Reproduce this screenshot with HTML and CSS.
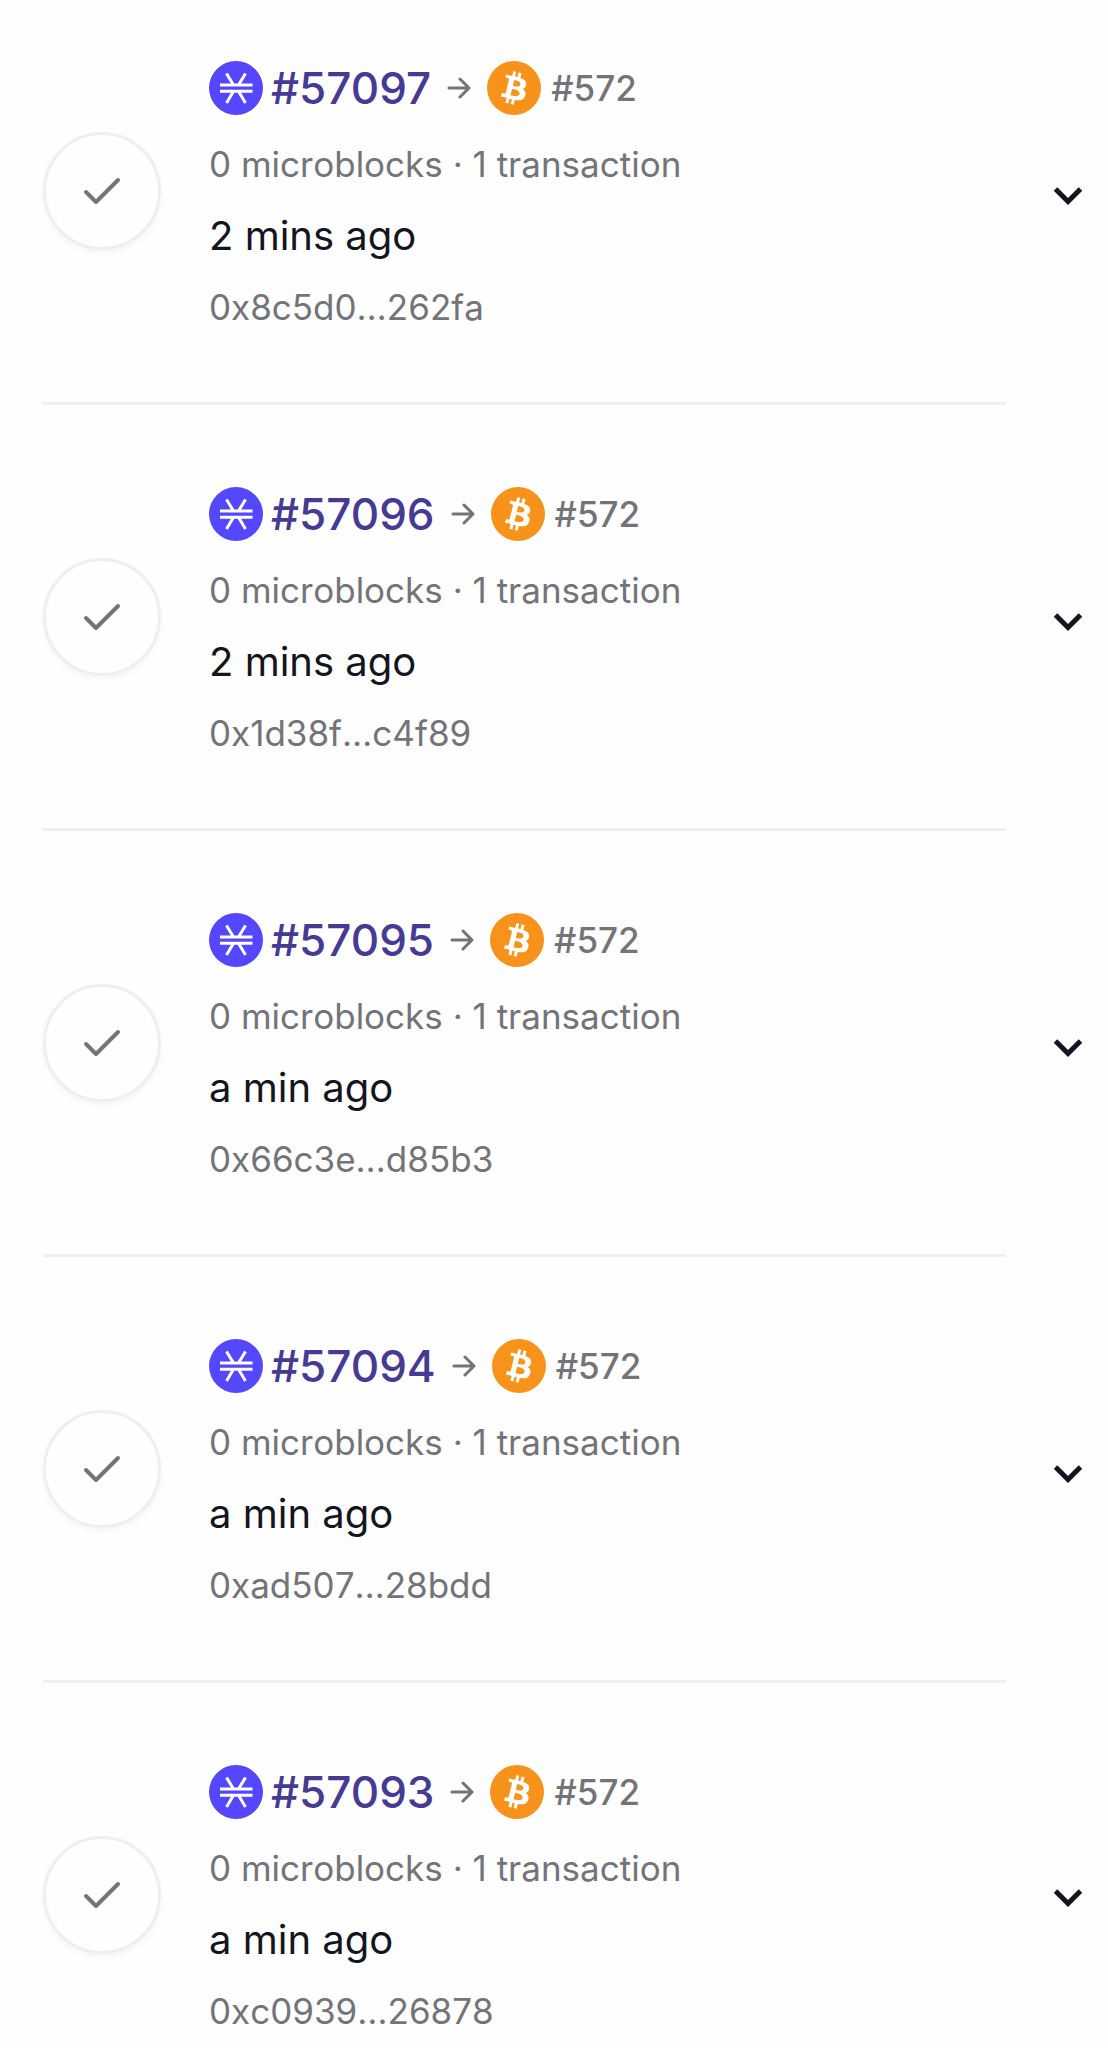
FILE: index.html
```html
<!DOCTYPE html>
<html lang="en">
<head>
    <meta charset="UTF-8">
    <meta name="viewport" content="width=device-width, initial-scale=1.0">
    <title>Recent blocks</title>
    <link rel="stylesheet" href="styles.css">
</head>
<body>
    <!-- Shared icons -->
    <svg class="sprite" aria-hidden="true">
        <symbol id="icon-check" viewBox="0 0 40 40">
            <path d="M4 21 L14 31 L36 9" fill="none" stroke="currentColor" stroke-width="4" stroke-linecap="round" stroke-linejoin="round"/>
        </symbol>
        <symbol id="icon-stx" viewBox="0 0 54 54">
            <circle cx="27" cy="27" r="27" fill="#5546ff"/>
            <path d="M11 24h32.500M11 30.300h32.500M17.500 12.500l7 11.500M36.500 12.500l-7 11.500M17.500 42l7-11.700M36.500 42l-7-11.700" fill="none" stroke="#fff" stroke-width="3"/>
        </symbol>
        <symbol id="icon-arrow" viewBox="0 0 24 22">
            <path d="M2 11h20M13 2l9 9-9 9" fill="none" stroke="currentColor" stroke-width="3" stroke-linecap="round" stroke-linejoin="round"/>
        </symbol>
        <symbol id="icon-btc" viewBox="0 0 32 32">
            <circle cx="16" cy="16" r="16" fill="#f7931a"/>
            <path fill="#fff" d="M23.189 14.02c.314-2.096-1.283-3.223-3.465-3.975l.708-2.84-1.728-.43-.69 2.765c-.454-.114-.92-.22-1.385-.326l.695-2.783L15.596 6l-.708 2.839c-.376-.086-.746-.17-1.104-.26l.002-.009-2.384-.595-.46 1.846s1.283.294 1.256.312c.7.175.826.638.805 1.006l-.806 3.235c.048.012.11.03.18.057l-.183-.045-1.13 4.532c-.086.212-.303.531-.793.41.018.025-1.256-.313-1.256-.313l-.858 1.978 2.25.561c.418.105.828.215 1.231.318l-.715 2.872 1.727.43.708-2.84c.472.127.93.245 1.378.357l-.706 2.828 1.728.43.715-2.866c2.948.558 5.164.333 6.097-2.333.752-2.146-.037-3.385-1.588-4.192 1.13-.26 1.98-1.003 2.207-2.538zm-3.95 5.538c-.533 2.147-4.148.986-5.32.695l.95-3.805c1.172.293 4.929.872 4.37 3.11zm.535-5.569c-.487 1.953-3.495.96-4.47.717l.86-3.45c.975.243 4.118.696 3.61 2.733z"/>
        </symbol>
        <symbol id="icon-chevron" viewBox="0 0 30 20">
            <path d="M2.500 3l12.500 12.500L27.500 3" fill="none" stroke="currentColor" stroke-width="5"/>
        </symbol>
    </svg>

    <ul class="block-list">
        <li class="block-item">
            <div class="block-main">
                <div class="status"><svg class="check"><use href="#icon-check"/></svg></div>
                <div class="details">
                    <div class="title">
                        <svg class="coin"><use href="#icon-stx"/></svg>
                        <a class="height" href="#57097">#57097</a>
                        <svg class="arrow"><use href="#icon-arrow"/></svg>
                        <svg class="coin"><use href="#icon-btc"/></svg>
                        <span class="anchor">#572</span>
                    </div>
                    <p class="meta">0 microblocks · 1 transaction</p>
                    <p class="time">2 mins ago</p>
                    <p class="meta">0x8c5d0…262fa</p>
                </div>
            </div>
            <button class="toggle" type="button" aria-label="Show block 57097"><svg class="chevron"><use href="#icon-chevron"/></svg></button>
        </li>

        <li class="block-item">
            <div class="block-main">
                <div class="status"><svg class="check"><use href="#icon-check"/></svg></div>
                <div class="details">
                    <div class="title">
                        <svg class="coin"><use href="#icon-stx"/></svg>
                        <a class="height" href="#57096">#57096</a>
                        <svg class="arrow"><use href="#icon-arrow"/></svg>
                        <svg class="coin"><use href="#icon-btc"/></svg>
                        <span class="anchor">#572</span>
                    </div>
                    <p class="meta">0 microblocks · 1 transaction</p>
                    <p class="time">2 mins ago</p>
                    <p class="meta">0x1d38f…c4f89</p>
                </div>
            </div>
            <button class="toggle" type="button" aria-label="Show block 57096"><svg class="chevron"><use href="#icon-chevron"/></svg></button>
        </li>

        <li class="block-item">
            <div class="block-main">
                <div class="status"><svg class="check"><use href="#icon-check"/></svg></div>
                <div class="details">
                    <div class="title">
                        <svg class="coin"><use href="#icon-stx"/></svg>
                        <a class="height" href="#57095">#57095</a>
                        <svg class="arrow"><use href="#icon-arrow"/></svg>
                        <svg class="coin"><use href="#icon-btc"/></svg>
                        <span class="anchor">#572</span>
                    </div>
                    <p class="meta">0 microblocks · 1 transaction</p>
                    <p class="time">a min ago</p>
                    <p class="meta">0x66c3e…d85b3</p>
                </div>
            </div>
            <button class="toggle" type="button" aria-label="Show block 57095"><svg class="chevron"><use href="#icon-chevron"/></svg></button>
        </li>

        <li class="block-item">
            <div class="block-main">
                <div class="status"><svg class="check"><use href="#icon-check"/></svg></div>
                <div class="details">
                    <div class="title">
                        <svg class="coin"><use href="#icon-stx"/></svg>
                        <a class="height" href="#57094">#57094</a>
                        <svg class="arrow"><use href="#icon-arrow"/></svg>
                        <svg class="coin"><use href="#icon-btc"/></svg>
                        <span class="anchor">#572</span>
                    </div>
                    <p class="meta">0 microblocks · 1 transaction</p>
                    <p class="time">a min ago</p>
                    <p class="meta">0xad507…28bdd</p>
                </div>
            </div>
            <button class="toggle" type="button" aria-label="Show block 57094"><svg class="chevron"><use href="#icon-chevron"/></svg></button>
        </li>

        <li class="block-item">
            <div class="block-main">
                <div class="status"><svg class="check"><use href="#icon-check"/></svg></div>
                <div class="details">
                    <div class="title">
                        <svg class="coin"><use href="#icon-stx"/></svg>
                        <a class="height" href="#57093">#57093</a>
                        <svg class="arrow"><use href="#icon-arrow"/></svg>
                        <svg class="coin"><use href="#icon-btc"/></svg>
                        <span class="anchor">#572</span>
                    </div>
                    <p class="meta">0 microblocks · 1 transaction</p>
                    <p class="time">a min ago</p>
                    <p class="meta">0xc0939…26878</p>
                </div>
            </div>
            <button class="toggle" type="button" aria-label="Show block 57093"><svg class="chevron"><use href="#icon-chevron"/></svg></button>
        </li>
    </ul>
</body>
</html>
```
FILE: styles.css
```css
* {
    box-sizing: border-box;
}

body {
    font-family: Inter, "Liberation Sans", sans-serif;
    background-color: #fefefe;
    color: #747478;
    margin: 0;
}

.sprite {
    display: none;
}

/* List of blocks */
.block-list {
    list-style: none;
    margin: 0;
    padding: 0 25px 0 43px;
}

.block-item {
    display: flex;
    padding-top: 81px;
}

.block-item:first-child {
    padding-top: 60px;
}

.block-main {
    flex: 1;
    display: flex;
    align-items: center;
    gap: 48px;
    padding-bottom: 74px;
    border-bottom: 3px solid #efeff1;
}

.block-item:last-child .block-main,
.block-item:last-child .toggle {
    padding-bottom: 0;
    border-bottom: none;
}

/* Status circle */
.status {
    display: flex;
    align-items: center;
    justify-content: center;
    width: 118px;
    height: 118px;
    margin-bottom: 6px;
    border: 3px solid #efeff1;
    border-radius: 50%;
    box-shadow: 0 3px 6px rgba(0, 0, 0, 0.04);
}

.check {
    width: 40px;
    height: 40px;
}

/* Block text */
.details {
    display: flex;
    flex-direction: column;
    gap: 27px;
}

.title {
    display: flex;
    align-items: center;
    height: 56px;
}

.coin {
    width: 54px;
    height: 54px;
}

.height {
    margin: 0 16px 0 8px;
    font-size: 44px;
    font-weight: 500;
    color: #463a93;
    text-decoration: none;
}

.arrow {
    width: 24px;
    height: 22px;
    margin-right: 16px;
}

.anchor {
    margin-left: 10px;
    font-size: 35px;
    font-weight: 500;
}

.meta {
    margin: 0;
    font-size: 35px;
    font-kerning: none;
    line-height: 42px;
}

.time {
    margin: 0;
    font-size: 40px;
    line-height: 47px;
    color: #141520;
}

/* Expand button */
.toggle {
    display: flex;
    align-items: center;
    justify-content: center;
    width: 30px;
    margin-left: 47px;
    padding: 0 0 74px;
    border: none;
    background: none;
    color: #141520;
    cursor: pointer;
}

.chevron {
    flex: none;
    width: 30px;
    height: 20px;
}
```
